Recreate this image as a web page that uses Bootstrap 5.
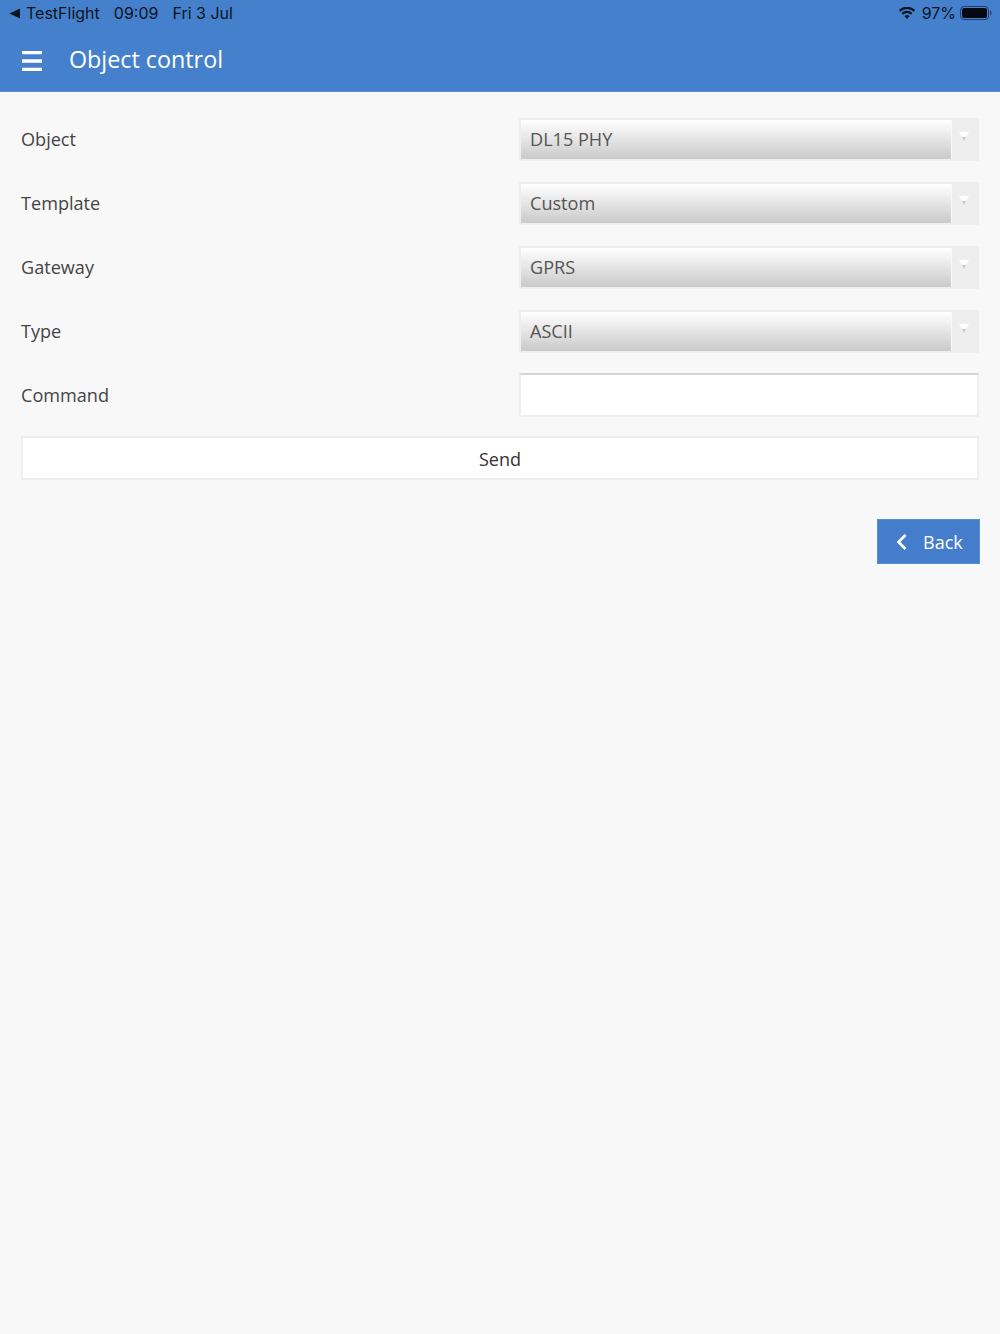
<!DOCTYPE html>
<html lang="en">
<head>
  <meta charset="UTF-8" />
  <meta name="viewport" content="width=device-width, initial-scale=1.0"/>
  <title>Object control</title>
  <link href="https://cdn.jsdelivr.net/npm/bootstrap@5.3.3/dist/css/bootstrap.min.css" rel="stylesheet">
  <style>
    html, body { height: 100%; }
    body {
      background: #f8f8f8;
      font-family: "Open Sans", "Noto Sans", sans-serif;
      color: #444;
      font-size: 18px;
      overflow: hidden;
    }
    .app-head {
      background: #4580cd;
      height: 92px;
      color: #fff;
      border-bottom: 1px solid #5a8fd4;
    }
    .status-bar {
      height: 26px;
      padding: 0 8px 0 9px;
      color: #0c1420;
      font-family: Inter, "Liberation Sans", sans-serif;
      font-size: 16px;
      line-height: 26px;
    }
    .status-left span { margin-right: 14px; }
    .back-tri { margin-right: 6px; }
    .pct { margin: 0 4px 0 6px; }
    .title-bar { height: 65px; padding: 2px 0 0 22px; }
    .menu-icon { margin-top: 3px; }
    .head-title { font-size: 23.3px; margin-left: 27px; font-weight: 400; line-height: 1; margin-bottom: 0; }
    .form-wrap { padding: 26px 21px 0; }
    .form-line { height: 43px; margin-bottom: 21px; }
    .form-line.cmd-line { margin-bottom: 19px; }
    .line-label { width: 498px; flex: none; margin: 0; font-size: 18.1px; }
    .fake-select {
      flex: 1 1 auto;
      height: 43px;
      border: 2px solid #eee;
      background: #eee;
      border-radius: 0;
    }
    .select-value {
      flex: 1 1 auto;
      background: linear-gradient(#fff, #cacaca);
      padding-left: 9px;
      line-height: 39px;
      font-size: 18.1px;
      color: #555;
      border-right: 1px solid #f8f8f8;
    }
    .select-arrow { width: 25px; flex: none; padding: 0 2px 6px 0; }
    .cmd-input, .cmd-input:focus {
      flex: 1 1 auto;
      height: 44px;
      margin-top: -1px;
      border: 2px solid #eee;
      border-top-color: #d4d4d4;
      border-radius: 0;
      background: #fff;
      box-shadow: none;
    }
    .send-btn, .send-btn:hover {
      height: 44px;
      border: 2px solid #eee;
      border-radius: 0;
      background: #fff;
      color: #333;
      font-size: 18px;
      padding: 2px 0 0;
    }
    .back-row { padding: 39px 20px 0 0; }
    .back-btn, .back-btn:hover {
      width: 103px;
      height: 45px;
      background: #437dcb;
      border: 1px solid #5a8fd4;
      border-radius: 0;
      color: #fff;
      font-size: 18px;
      padding: 0 0 0 17px;
    }
    .back-txt { margin: 2px 0 0 15px; }
  </style>
</head>
<body>
  <!-- Header -->
  <header class="app-head">
    <div class="status-bar d-flex justify-content-between align-items-center">
      <div class="status-left d-flex align-items-center">
        <svg class="back-tri" width="11" height="11" viewBox="0 0 11 11"><path d="M11 0.5V10.5L0.5 5.500Z" fill="#0c1420"/></svg>
        <span>TestFlight</span>
        <span>09:09</span>
        <span>Fri 3 Jul</span>
      </div>
      <div class="d-flex align-items-center">
        <svg width="18" height="12" viewBox="0 0 19 14"><path d="M9.5 14 6.600 10.700a4.200 4.200 0 0 1 5.800 0Z M4.900 8.900 3.200 7a9 9 0 0 1 12.600 0L14.100 8.900a6.600 6.600 0 0 0-9.200 0Z M1.700 5.400 0 3.500a13.700 13.700 0 0 1 19 0L17.300 5.400a11.300 11.300 0 0 0-15.600 0Z" fill="#0c1420"/></svg>
        <span class="pct">97%</span>
        <svg width="32" height="14" viewBox="0 0 32 14">
          <rect x=".5" y=".5" width="28" height="13" rx="3.500" fill="none" stroke="#1f3f6e"/>
          <rect x="2" y="2" width="25" height="10" rx="2" fill="#050a12"/>
          <path d="M30 4.500c1 .3 1.500 1.300 1.500 2.500s-.5 2.200-1.500 2.500Z" fill="#1f3f6e"/>
        </svg>
      </div>
    </div>
    <div class="title-bar d-flex align-items-center">
      <svg class="menu-icon" width="20" height="20" viewBox="0 0 20 20"><path d="M0 1.500h20M0 10h20M0 18.500h20" stroke="#fff" stroke-width="3.500"/></svg>
      <h1 class="head-title">Object control</h1>
    </div>
  </header>

  <!-- Form -->
  <main class="form-wrap">
    <div class="form-line d-flex align-items-center">
      <label class="line-label">Object</label>
      <div class="fake-select d-flex">
        <div class="select-value">DL15 PHY</div>
        <div class="select-arrow d-flex align-items-center justify-content-center">
          <svg width="10" height="9" viewBox="0 0 10 9"><path d="M0 0H10L5 9Z" fill="#fff"/><path d="M2.500 4.500 5 9 7.500 4.500Q5 5.500 2.500 4.500Z" fill="#ccc"/></svg>
        </div>
      </div>
    </div>
    <div class="form-line d-flex align-items-center">
      <label class="line-label">Template</label>
      <div class="fake-select d-flex">
        <div class="select-value">Custom</div>
        <div class="select-arrow d-flex align-items-center justify-content-center">
          <svg width="10" height="9" viewBox="0 0 10 9"><path d="M0 0H10L5 9Z" fill="#fff"/><path d="M2.500 4.500 5 9 7.500 4.500Q5 5.500 2.500 4.500Z" fill="#ccc"/></svg>
        </div>
      </div>
    </div>
    <div class="form-line d-flex align-items-center">
      <label class="line-label">Gateway</label>
      <div class="fake-select d-flex">
        <div class="select-value">GPRS</div>
        <div class="select-arrow d-flex align-items-center justify-content-center">
          <svg width="10" height="9" viewBox="0 0 10 9"><path d="M0 0H10L5 9Z" fill="#fff"/><path d="M2.500 4.500 5 9 7.500 4.500Q5 5.500 2.500 4.500Z" fill="#ccc"/></svg>
        </div>
      </div>
    </div>
    <div class="form-line d-flex align-items-center">
      <label class="line-label">Type</label>
      <div class="fake-select d-flex">
        <div class="select-value">ASCII</div>
        <div class="select-arrow d-flex align-items-center justify-content-center">
          <svg width="10" height="9" viewBox="0 0 10 9"><path d="M0 0H10L5 9Z" fill="#fff"/><path d="M2.500 4.500 5 9 7.500 4.500Q5 5.500 2.500 4.500Z" fill="#ccc"/></svg>
        </div>
      </div>
    </div>
    <div class="form-line cmd-line d-flex align-items-center">
      <label class="line-label" for="cmd">Command</label>
      <input id="cmd" type="text" class="form-control cmd-input">
    </div>
    <button type="button" class="btn send-btn w-100">Send</button>
  </main>

  <div class="back-row d-flex justify-content-end">
    <button type="button" class="btn back-btn d-flex align-items-center">
      <svg width="13" height="18" viewBox="0 0 13 18"><path d="M10.500 2 3.500 9l7 7" fill="none" stroke="#fff" stroke-width="2.600"/></svg>
      <span class="back-txt">Back</span>
    </button>
  </div>

  <script src="https://cdn.jsdelivr.net/npm/bootstrap@5.3.3/dist/js/bootstrap.bundle.min.js"></script>
</body>
</html>
